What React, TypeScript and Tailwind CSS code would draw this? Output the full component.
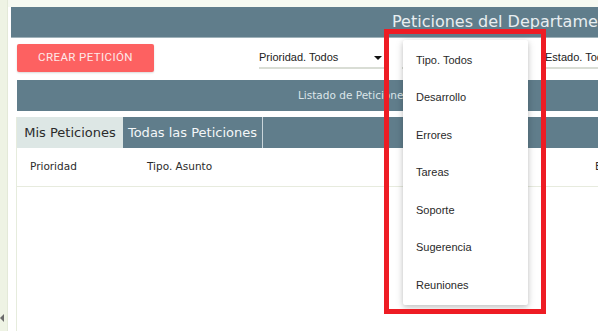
import React from 'react';

const dejavu = { fontFamily: '"DejaVu Sans", Verdana, sans-serif' };

const tipos = ['Tipo. Todos', 'Desarrollo', 'Errores', 'Tareas', 'Soporte', 'Sugerencia', 'Reuniones'];

function Select({ label, width }: { label?: string; width: string }) {
  return (
    <div className={`${width} shrink-0 flex items-center justify-between h-[20px] border-b-2 border-[#d9ddd5] pb-[1px] text-[11px] text-[#222] font-['Liberation_Sans',Arial,sans-serif]`}>
      <span>{label}</span>
      <span className="mr-[2px] h-0 w-0 border-x-[4px] border-t-[4px] border-x-transparent border-t-[#111]" />
    </div>
  );
}

export default function App() {
  return (
    <div className="relative flex h-[331px] w-[598px] overflow-hidden bg-[#f6f9f1]">
      {/* left strip */}
      <div className="relative w-[8px] shrink-0 bg-[#eef3e4] border-r border-[#e3e9d8]">
        <span className="absolute left-0 top-[314px] h-0 w-0 border-y-[4px] border-r-[4px] border-y-transparent border-r-[#6b6b6b]" />
      </div>

      <div className="mt-[7px] flex-1 min-w-0 bg-white pl-[3px]">
        <div className="w-[900px]">
          {/* title bar */}
          <div
            className="flex h-[31px] items-center bg-[#607d8b] pl-[381px] text-[16px] text-[#e8eef1] border-b border-[#9fb2ba]"
            style={dejavu}
          >
            Peticiones del Departamento de Sistemas
          </div>

          <div className="pl-[5px]">
            {/* actions */}
            <div className="flex items-center pl-[1px] pt-[6px]">
              <button className="h-[28px] w-[137px] shrink-0 rounded-[2px] bg-[#fd6161] text-[11.5px] uppercase tracking-[0.4px] text-[#fde9e9] shadow-[0_1px_2px_rgba(0,0,0,0.15)] font-['Roboto',sans-serif]">
                Crear Petición
              </button>
              <div className="ml-[105px] flex gap-[18px] pt-[2px]">
                <Select label="Prioridad. Todos" width="w-[125px]" />
                <Select width="w-[125px]" />
                <Select label="Estado. Todos" width="w-[125px]" />
              </div>
            </div>

            {/* list bar */}
            <div
              className="mt-[8px] ml-[1px] flex h-[31px] items-center bg-[#607d8b] pl-[281px] text-[10.5px] text-[#dce5e9]"
              style={dejavu}
            >
              Listado de Peticiones
            </div>

            {/* table */}
            <div className="mt-[6px] border-l border-[#e6ecdd]">
              <div className="flex h-[31px] bg-[#607d8b] text-[13px]" style={dejavu}>
                <div className="flex w-[106px] items-center justify-center bg-[#dde7e5] text-[#2b2b2b]">Mis Peticiones</div>
                <div className="flex w-[140px] items-center justify-center border-r border-[#c9d5da] text-[#f4f7f8]">
                  Todas las Peticiones
                </div>
              </div>
              <div
                className="flex h-[39px] items-center border-b border-[#e7ebde] text-[10.5px] text-[#2b2b2b]"
                style={dejavu}
              >
                <span className="w-[130px] pl-[13px]">Prioridad</span>
                <span className="w-[448px]">Tipo. Asunto</span>
                <span>Estado</span>
              </div>
              <div className="h-[150px]" />
            </div>
          </div>
        </div>
      </div>

      {/* open dropdown */}
      <ul className="absolute left-[403px] top-[40px] w-[125px] rounded-[2px] bg-white py-[1px] shadow-[0_2px_5px_rgba(0,0,0,0.16),0_2px_10px_rgba(0,0,0,0.12)] font-['Liberation_Sans',Arial,sans-serif] text-[11px] text-[#2a2a2a]">
        {tipos.map(t => (
          <li key={t} className="flex h-[37.5px] items-center pl-[13px]">
            {t}
          </li>
        ))}
      </ul>

      {/* highlight */}
      <div className="absolute left-[384px] top-[29px] h-[285px] w-[162px] border-[5px] border-[#ee1c24]" />
    </div>
  );
}
